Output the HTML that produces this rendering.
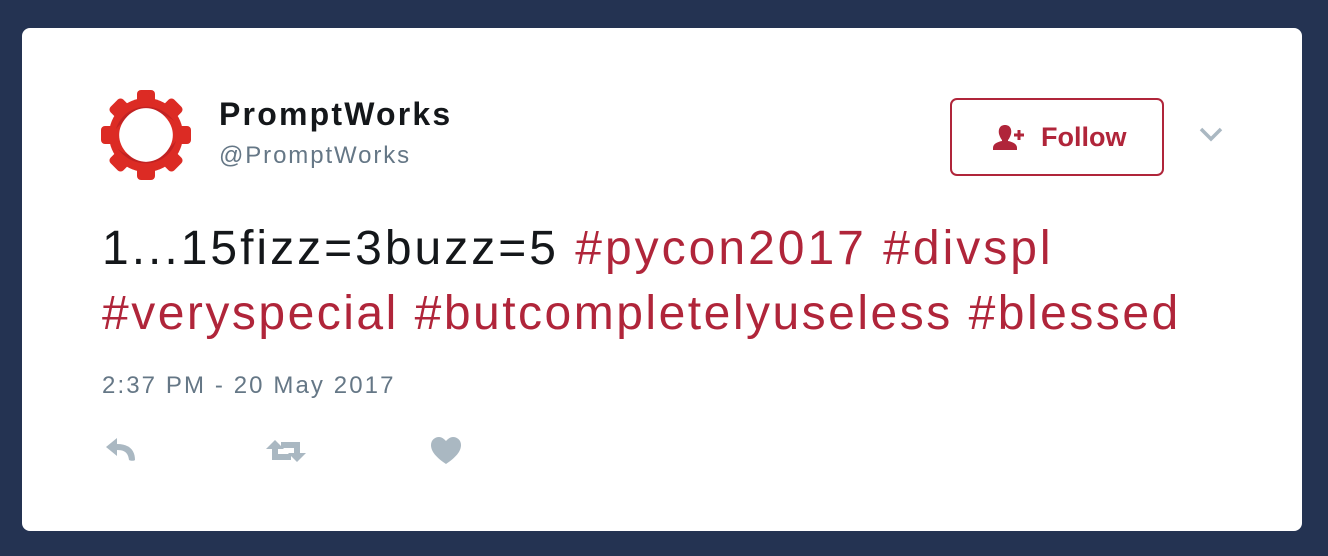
<!DOCTYPE html>
<html><head><style>
body{margin:0;width:1328px;height:556px;background:#243352;font-family:"Liberation Sans",Arial,sans-serif;overflow:hidden;position:relative}
.card{position:absolute;left:22px;top:28px;width:1280px;height:503px;background:#fff;border-radius:8px}
.a{position:absolute;white-space:nowrap}
.name{left:197px;top:68px;font-size:32px;font-weight:bold;color:#14171a;letter-spacing:2.2px}
.handle{left:197px;top:114px;font-size:24px;color:#657786;letter-spacing:1.9px}
.txt{left:80px;font-size:48px;color:#14171a;letter-spacing:3px}
.h{color:#b0253a}
.ts{left:80px;top:344px;font-size:24px;color:#657786;letter-spacing:2.1px}
.btn{position:absolute;left:928px;top:70px;width:210px;height:74px;border:2px solid #b0253a;border-radius:7px;color:#b0253a;font-weight:bold;font-size:27px}
</style></head><body>
<div class="card">
<svg class="a" style="left:78px;top:60px" width="92" height="94" viewBox="-46 -47 92 94">
<g fill="#dc2b24">
<circle r="37"/>
<g id="t"><rect x="-9" y="-45" width="18" height="14" rx="4"/></g>
<use href="#t" transform="rotate(45)"/><use href="#t" transform="rotate(90)"/><use href="#t" transform="rotate(135)"/>
<use href="#t" transform="rotate(180)"/><use href="#t" transform="rotate(225)"/><use href="#t" transform="rotate(270)"/><use href="#t" transform="rotate(315)"/>
</g>
<path d="M-30 -6 C-22 -32 12 -36 28 -14 C12 -28 -18 -22 -30 -6Z" fill="#b51f22" opacity="0.7"/>
<path d="M30 6 C22 32 -12 36 -28 14 C-12 28 18 22 30 6Z" fill="#b51f22" opacity="0.7"/>
<path d="M0 -24 C14 -24 24 -14 24 0 C24 14 14 24 0 24 C-14 24 -24 14 -24 0 C-24 -14 -14 -24 0 -24Z" fill="#fff" transform="rotate(45) scale(1.1,1.1)"/>
</svg>
<div class="a name">PromptWorks</div>
<div class="a handle">@PromptWorks</div>
<div class="btn"><svg class="a" style="left:40px;top:24px" width="36" height="26" viewBox="0 0 36 26"><path d="M13 1c5 0 7 4 6 9-1 3-2 5-3 6v1c5 1 9 3 9 7v2H1v-2c0-4 4-6 9-7v-1c-1-1-2-3-3-6-1-5 1-9 6-9z" fill="#b0253a"/><path d="M27 6v10M22 11h10" stroke="#b0253a" stroke-width="3"/></svg><span class="a" style="left:89px;top:22px">Follow</span></div>
<svg class="a" style="left:1176px;top:98px" width="26" height="16" viewBox="0 0 26 16"><path d="M3 3l10 10 10-10" fill="none" stroke="#aab8c2" stroke-width="3.5"/></svg>
<div class="a txt" style="top:193px">1...15fizz=3buzz=5 <span class="h">#pycon2017 #divspl</span></div>
<div class="a txt h" style="top:258px;letter-spacing:2.5px">#veryspecial #butcompletelyuseless #blessed</div>
<div class="a ts">2:37 PM - 20 May 2017</div>
<svg class="a" style="left:83px;top:408px" width="34" height="28" viewBox="0 0 34 28"><path d="M12 2L1 11l11 9v-6c7 0 11 2 12 10 2 1 5 1 6 0 0-10-6-16-18-16z" fill="#aab8c2"/></svg>
<svg class="a" style="left:243px;top:410px" width="42" height="26" viewBox="0 0 42 26"><path d="M10 2L1 11h6v11h19v-6H13v-5h6z M32 24l9-9h-6V4H16v6h13v5h-6z" fill="#aab8c2"/></svg>
<svg class="a" style="left:408px;top:408px" width="32" height="30" viewBox="0 0 32 30"><path d="M16 28C4 20 1 14 1 9 1 4 5 1 9 1c3 0 5 2 7 4 2-2 4-4 7-4 4 0 8 3 8 8 0 5-3 11-15 19z" fill="#aab8c2"/></svg>
</div>
</body></html>
